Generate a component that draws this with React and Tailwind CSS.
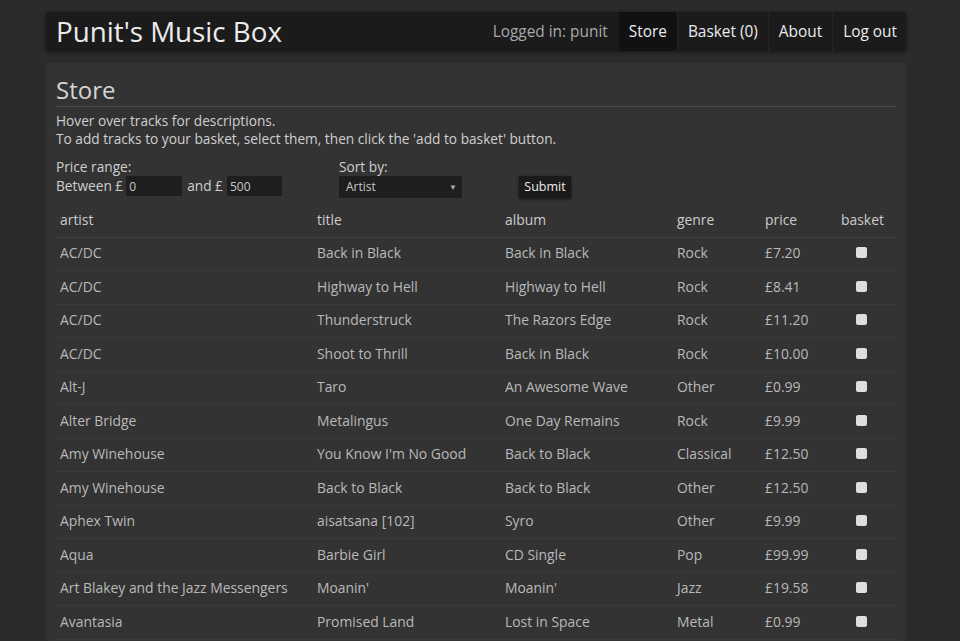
import { useState } from 'react';

const TRACKS = [
  ['AC/DC', 'Back in Black', 'Back in Black', 'Rock', '£7.20'],
  ['AC/DC', 'Highway to Hell', 'Highway to Hell', 'Rock', '£8.41'],
  ['AC/DC', 'Thunderstruck', 'The Razors Edge', 'Rock', '£11.20'],
  ['AC/DC', 'Shoot to Thrill', 'Back in Black', 'Rock', '£10.00'],
  ['Alt-J', 'Taro', 'An Awesome Wave', 'Other', '£0.99'],
  ['Alter Bridge', 'Metalingus', 'One Day Remains', 'Rock', '£9.99'],
  ['Amy Winehouse', "You Know I'm No Good", 'Back to Black', 'Classical', '£12.50'],
  ['Amy Winehouse', 'Back to Black', 'Back to Black', 'Other', '£12.50'],
  ['Aphex Twin', 'aisatsana [102]', 'Syro', 'Other', '£9.99'],
  ['Aqua', 'Barbie Girl', 'CD Single', 'Pop', '£99.99'],
  ['Art Blakey and the Jazz Messengers', "Moanin'", "Moanin'", 'Jazz', '£19.58'],
  ['Avantasia', 'Promised Land', 'Lost in Space', 'Metal', '£0.99'],
  ['Avenged Sevenfold', 'Hail to the King', 'Hail to the King', 'Metal', '£1.29'],
];

export default function App() {
  const [min, setMin] = useState('0');
  const [max, setMax] = useState('500');

  return (
    <div className="min-h-screen bg-[#2b2b2b] font-['Open_Sans',sans-serif] text-[#cfcfcf] pt-3">
      <div className="w-[860px] ml-[46px]">
        <nav className="h-[39px] bg-[#1b1b1b] shadow-[0_1px_4px_rgba(0,0,0,0.5)] flex items-stretch">
          <a className="pl-[10px] text-[27.75px] leading-[39px] text-[#ececec]">Punit's Music Box</a>
          <div className="ml-auto flex items-stretch text-[15.4px] text-[#ececec]">
            <span className="flex items-center pr-[11px] text-[#a9a9a9]">Logged in: punit</span>
            <a className="flex items-center px-[10px] bg-[#111111]">Store</a>
            <a className="flex items-center px-[10px] border-l border-[#262626]">Basket (0)</a>
            <a className="flex items-center px-[10px] border-l border-[#262626]">About</a>
            <a className="flex items-center pl-[10px] pr-[9px] border-l border-[#262626]">Log out</a>
          </div>
        </nav>

        <main className="mt-3 bg-[#333333] px-[10px] pt-[11px] pb-4">
          <h1 className="text-[24px] leading-[32px] text-[#d4d4d4] border-b border-[#4a4a4a]">Store</h1>
          <div className="mt-[5px] text-[13.7px] leading-[18px]">
            <p>Hover over tracks for descriptions.</p>
            <p>To add tracks to your basket, select them, then click the 'add to basket' button.</p>
          </div>

          <form className="mt-[10px] flex items-start text-[13.7px] leading-[18px]">
            <div className="w-[283px]">
              <div>Price range:</div>
              <div className="flex items-center h-[20px]">
                <span>Between £</span>
                <input
                  value={min}
                  onChange={(e) => setMin(e.target.value)}
                  className="ml-[3px] w-[56px] h-[20px] bg-[#1e1e1e] text-[#c8c8c8] text-[12px] px-[3px] outline-none"
                />
                <span className="ml-[5px]">and £</span>
                <input
                  value={max}
                  onChange={(e) => setMax(e.target.value)}
                  className="ml-[4px] w-[55px] h-[20px] bg-[#1e1e1e] text-[#c8c8c8] text-[12px] px-[3px] outline-none"
                />
              </div>
            </div>
            <div className="w-[180px]">
              <div>Sort by:</div>
              <div className="relative w-[123px] h-[22px] bg-[#1e1e1e] text-[12px] leading-[22px] pl-[7px] text-[#c8c8c8]">
                Artist
                <span className="absolute right-[5px] top-0 text-[8px] text-[#aaaaaa]">▼</span>
              </div>
            </div>
            <button
              type="button"
              className="mt-[18px] h-[22px] w-[52px] bg-[#1a1a1a] text-[12.5px] text-[#eeeeee] shadow-[0_1px_3px_rgba(0,0,0,0.6)]"
            >
              Submit
            </button>
          </form>

          <table className="mt-[6px] w-full table-fixed text-[13.9px] border-collapse">
            <colgroup>
              <col className="w-[257px]" />
              <col className="w-[188px]" />
              <col className="w-[172px]" />
              <col className="w-[88px]" />
              <col className="w-[76px]" />
              <col />
            </colgroup>
            <thead>
              <tr className="h-[33px] text-[#cccccc] border-b border-[#404040]">
                <th className="text-left font-normal px-1">artist</th>
                <th className="text-left font-normal px-1">title</th>
                <th className="text-left font-normal px-1">album</th>
                <th className="text-left font-normal px-1">genre</th>
                <th className="text-left font-normal px-1">price</th>
                <th className="text-left font-normal px-1">basket</th>
              </tr>
            </thead>
            <tbody>
              {TRACKS.map((t, i) => (
                <tr key={i} className="h-[33.5px] text-[#b9b9b9] border-b border-[#3b3b3b]">
                  <td className="px-1 whitespace-nowrap">{t[0]}</td>
                  <td className="px-1 whitespace-nowrap">{t[1]}</td>
                  <td className="px-1 whitespace-nowrap">{t[2]}</td>
                  <td className="px-1">{t[3]}</td>
                  <td className="px-1">{t[4]}</td>
                  <td className="px-1">
                    <input
                      type="checkbox"
                      className="appearance-none block ml-[15px] -mt-[2px] w-[11px] h-[11px] rounded-[2px] bg-[#dedede]"
                    />
                  </td>
                </tr>
              ))}
            </tbody>
          </table>
        </main>
      </div>
    </div>
  );
}
